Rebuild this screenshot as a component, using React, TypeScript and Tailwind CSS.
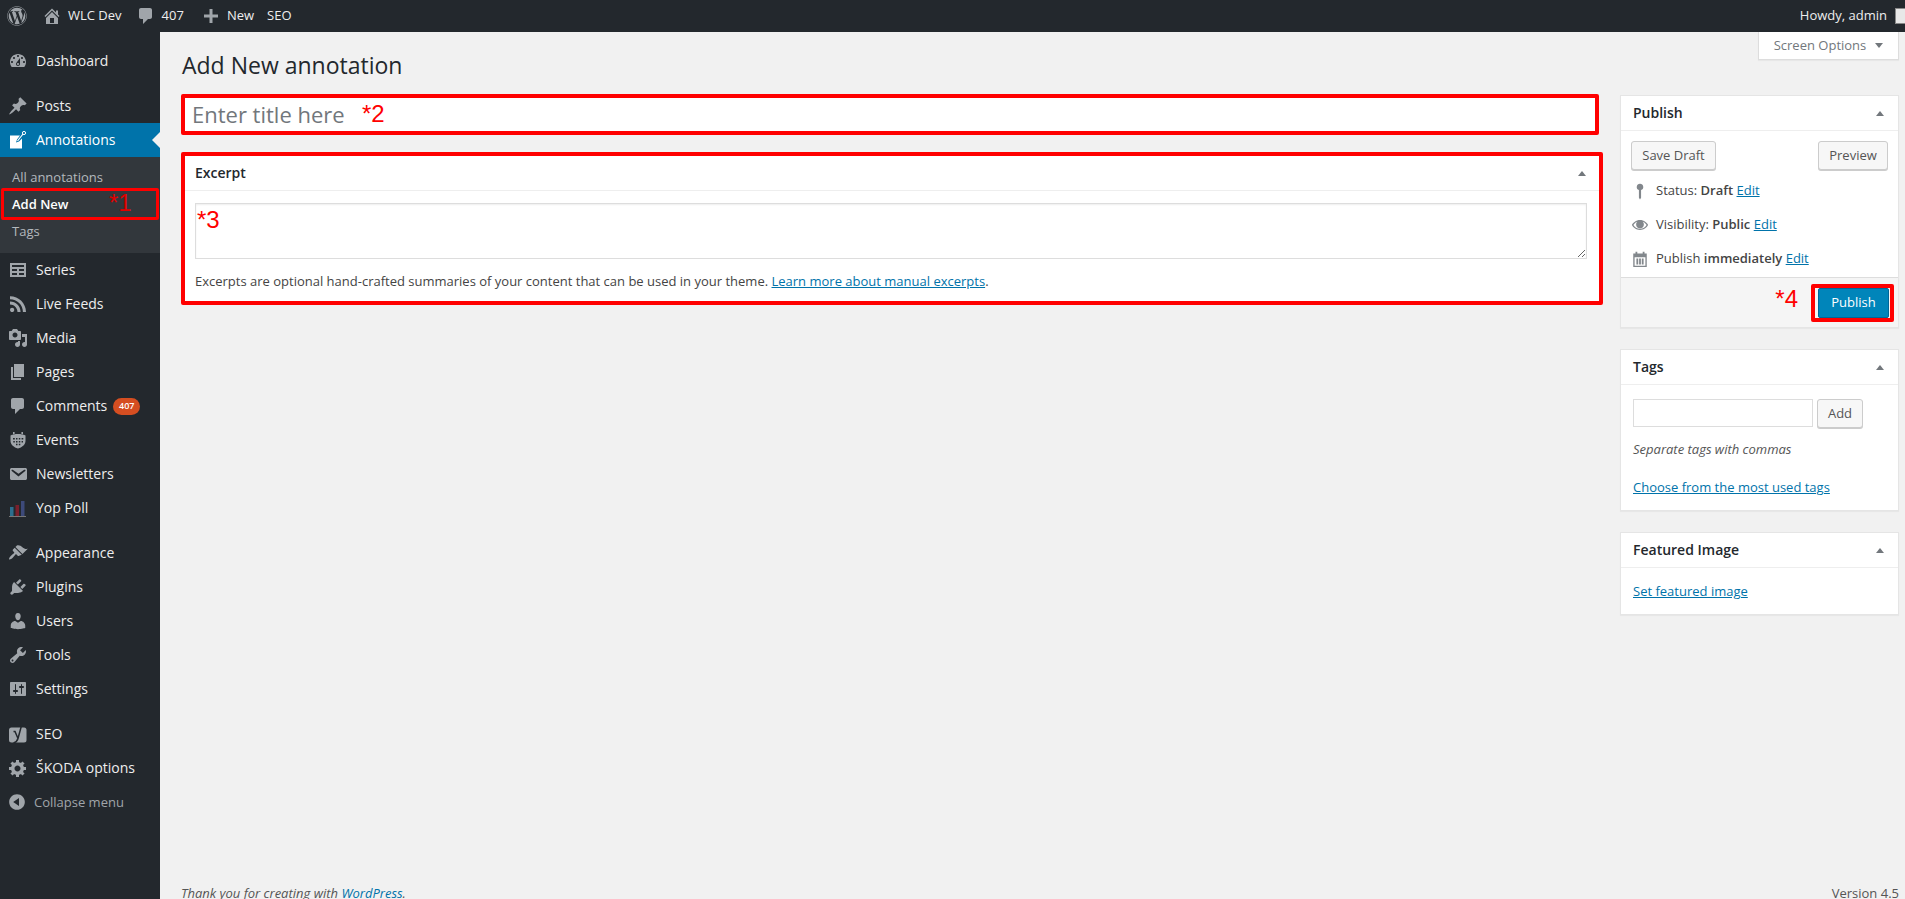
import React from "react";
import { FaWordpress } from "react-icons/fa";

const P: Record<string, string> = {
  dashboard: "M3.76 16h12.48c1.1-1.37 1.76-3.11 1.76-5 0-4.42-3.58-8-8-8s-8 3.58-8 8c0 1.89.66 3.63 1.76 5zM10 4c.55 0 1 .45 1 1s-.45 1-1 1-1-.45-1-1 .45-1 1-1zM6 6c.55 0 1 .45 1 1s-.45 1-1 1-1-.45-1-1 .45-1 1-1zm8 0c.55 0 1 .45 1 1s-.45 1-1 1-1-.45-1-1 .45-1 1-1zm-5.37 5.55L12 7v6c0 1.1-.9 2-2 2s-2-.9-2-2c0-.57.24-1.08.63-1.45zM4 10c.55 0 1 .45 1 1s-.45 1-1 1-1-.45-1-1 .45-1 1-1zm12 0c.55 0 1 .45 1 1s-.45 1-1 1-1-.45-1-1 .45-1 1-1zm-5 3c0-.55-.45-1-1-1s-1 .45-1 1 .45 1 1 1 1-.45 1-1z",
  post: "M10.44 3.02l1.82-1.82 6.36 6.35-1.83 1.82c-1.05-.68-2.48-.57-3.41.36l-.75.75c-.92.93-1.04 2.35-.35 3.41l-1.83 1.82-2.41-2.41-2.8 2.79c-.42.42-3.38 2.71-3.8 2.29s1.86-3.39 2.28-3.81l2.79-2.79L4.1 9.36l1.83-1.82c1.05.69 2.48.57 3.41-.36l.75-.75c.93-.92 1.04-2.35.35-3.41z",
  comments: "M5 2h9c1.1 0 2 .9 2 2v7c0 1.1-.9 2-2 2h-2l-5 5v-5H5c-1.1 0-2-.9-2-2V4c0-1.1.9-2 2-2z",
  home: "M16 8.5l1.53 1.53-1.06 1.06L10 4.62l-6.47 6.47-1.06-1.06L10 2.5l4 4v-2h2v4zm-6-2.46l6 5.99V18H4v-5.97zM12 17v-5H8v5h4z",
  plugins: "M13.11 4.36L9.87 7.6 8 5.73l3.24-3.24c.35-.34 1.05-.2 1.56.32.52.51.66 1.21.31 1.55zm-8 1.77l.91-1.12 9.01 9.01-1.19.84c-.71.71-2.63 1.16-3.82 1.16H6.14L4.9 17.26c-.59.59-1.54.59-2.12 0-.59-.58-.59-1.53 0-2.12l1.24-1.24v-3.88c0-1.13.4-3.19 1.09-3.89zm7.26 3.97l3.24-3.24c.34-.35 1.04-.21 1.55.31.52.51.66 1.21.31 1.55l-3.24 3.25z",
  users: "M10 9.25c-2.27 0-2.73-3.44-2.73-3.44C7 4.02 7.82 2 9.97 2c2.16 0 2.98 2.02 2.71 3.81 0 0-.41 3.44-2.68 3.44zm0 2.57L12.72 10c2.39 0 4.52 2.33 4.52 4.53v2.49s-3.65 1.13-7.24 1.13c-3.65 0-7.24-1.13-7.24-1.13v-2.49c0-2.25 1.94-4.48 4.47-4.48z",
  tools: "M16.68 9.77c-1.34 1.34-3.3 1.67-4.95.99l-5.41 6.52c-.99.99-2.59.99-3.58 0s-.99-2.59 0-3.57l6.52-5.42c-.68-1.65-.35-3.61.99-4.95 1.28-1.28 3.12-1.62 4.72-1.06l-2.89 2.89 2.82 2.82 2.86-2.87c.53 1.58.18 3.39-1.08 4.65zM3.81 16.21c.4.39 1.04.39 1.43 0 .4-.4.4-1.04 0-1.43-.39-.4-1.03-.4-1.43 0-.39.39-.39 1.03 0 1.43z",
  settings: "M18 16V4c0-.55-.45-1-1-1H3c-.55 0-1 .45-1 1v12c0 .55.45 1 1 1h14c.55 0 1-.45 1-1zM8 11h1c.55 0 1 .45 1 1s-.45 1-1 1H8v1.5c0 .28-.22.5-.5.5s-.5-.22-.5-.5V13H6c-.55 0-1-.45-1-1s.45-1 1-1h1V5.5c0-.28.22-.5.5-.5s.5.22.5.5V11zm5-2h-1c-.55 0-1-.45-1-1s.45-1 1-1h1V5.5c0-.28.22-.5.5-.5s.5.22.5.5V7h1c.55 0 1 .45 1 1s-.45 1-1 1h-1v5.5c0 .28-.22.5-.5.5s-.5-.22-.5-.5V9z",
  appearance: "M14.48 11.06L7.41 3.99l1.5-1.5c.5-.56 2.3-.47 3.51.32 1.21.8 1.43 1.28 2.91 2.1 1.18.64 2.45 1.26 4.45.85zm-.71.71L6.7 4.7 4.93 6.47c-.39.39-.39 1.02 0 1.41l1.06 1.06c.39.39.39 1.03 0 1.42-.6.6-1.43 1.11-2.21 1.69-.35.26-.7.53-1.01.84-1.34 1.34-2.12 3-1.57 3.54.54.55 2.2-.23 3.55-1.57.31-.31.58-.66.85-1.02.57-.78 1.08-1.6 1.69-2.21.39-.39 1.02-.39 1.41 0l1.06 1.06c.39.39 1.02.39 1.41 0z",
  media: "M13 11V4c0-.55-.45-1-1-1h-1.67L9 1H5L3.67 3H2c-.55 0-1 .45-1 1v7c0 .55.45 1 1 1h10c.55 0 1-.45 1-1zM7 4.5c1.38 0 2.5 1.12 2.5 2.5S8.38 9.5 7 9.5 4.5 8.38 4.5 7 5.62 4.5 7 4.5zM14 6h5v10.5c0 1.38-1.12 2.5-2.5 2.5S14 17.88 14 16.5s1.12-2.5 2.5-2.5c.17 0 .34.02.5.05V9h-3V6zm-4 8.05V13h2v3.5c0 1.38-1.12 2.5-2.5 2.5S7 17.88 7 16.5 8.12 14 9.5 14c.17 0 .34.02.5.05z",
  page: "M6 15V2h10v13H6zm-1 1h8v2H3V5h2v11z",
  collapse: "M10 2.16c4.33 0 7.84 3.51 7.84 7.84s-3.51 7.84-7.84 7.84S2.16 14.33 2.16 10 5.71 2.16 10 2.16zm2 11.72V6.12L6.18 9.97z",
  generic: "M18 12h-2.18c-.17.7-.44 1.35-.81 1.93l1.54 1.54-2.1 2.1-1.54-1.54c-.58.36-1.23.63-1.91.79V19H8v-2.18c-.68-.16-1.33-.43-1.91-.79l-1.54 1.54-2.12-2.12 1.54-1.54c-.36-.58-.63-1.23-.79-1.91H1V9.03h2.17c.16-.7.44-1.35.8-1.94L2.43 5.55l2.1-2.1 1.54 1.54c.58-.37 1.24-.64 1.93-.81V2h3v2.18c.68.16 1.33.43 1.91.79l1.54-1.54 2.12 2.12-1.54 1.54c.36.59.64 1.24.8 1.94H18V12zm-8.5 1.5c1.66 0 3-1.34 3-3s-1.34-3-3-3-3 1.34-3 3 1.34 3 3 3z",
  rss: "M14.92 18H18C18 9.32 10.82 2.25 2 2.25v3.02c7.12 0 12.92 5.71 12.92 12.73zm-5.44 0h3.08C12.56 12.27 7.82 7.6 2 7.6v3.02c2 0 3.87.77 5.29 2.16 1.41 1.39 2.19 3.25 2.19 5.22zm-5.35-.02c1.17 0 2.13-.93 2.13-2.09 0-1.15-.96-2.09-2.13-2.09-1.18 0-2.13.94-2.13 2.09 0 1.16.95 2.09 2.13 2.09z",
  table: "M18 17V3H2v14h16zM16 7H4V5h12v2zm-7 4H4V9h5v2zm7 0h-5V9h5v2zm-7 4H4v-2h5v2zm7 0h-5v-2h5v2z",
  email: "M3.87 4h13.25C18.37 4 19 4.59 19 5.79v8.42c0 1.19-.63 1.79-1.88 1.79H3.87c-1.25 0-1.88-.6-1.88-1.79V5.79c0-1.2.63-1.79 1.88-1.79zm6.62 8.6l6.74-5.53c.24-.2.43-.66.13-1.07-.29-.41-.82-.42-1.17-.17l-5.7 3.86L4.8 5.83c-.35-.25-.88-.24-1.17.17-.3.41-.11.87.13 1.07z",
  plus: "M17 8.5v3h-5.5V17h-3v-5.5H3v-3h5.5V3h3v5.5z",
  events: "M5 2h1.6v3H5zM13.4 2h1.6v3h-1.6zM2.500 5.500C4.500 4.500 7 4 10 4s5.500.5 7.500 1.500V11c0 3.500-3.500 6.500-7.500 7.500-4-1-7.500-4-7.500-7.500zM5 8v1.500h1.800V8zm3 0v1.500h1.500V8zm2.800 0v1.500h1.500V8zm2.800 0v1.500H15.300V8zM5.300 11v1.500h1.500V11zm2.700 0v1.500h1.500V11zm2.800 0v1.500h1.500V11zm2.800 0v1.500H15V11zM8 13.800v1.500h1.500v-1.500zm2.800 0v1.500h1.500v-1.500z",
  pin: "M10 2a3.600 3.600 0 0 1 1.200 7v8.500L10 19.500l-1.200-2V9A3.600 3.600 0 0 1 10 2z",
  eye: "M10 4.500C5.500 4.500 2.200 7.500 1 10c1.200 2.500 4.500 5.500 9 5.500s7.800-3 9-5.500c-1.200-2.500-4.500-5.500-9-5.500zm0 9.800C6.600 14.300 4 12.200 2.700 10 3.600 8.500 5 7.200 6.700 6.400A4.400 4.400 0 0 0 5.700 9.200a4.300 4.300 0 0 0 8.600 0c0-1-.4-2-1-2.800 1.700.8 3.100 2.100 4 3.600-1.300 2.200-3.900 4.300-7.300 4.300z",
  calendar: "M5 2h2v2h6V2h2v2h2.500v15h-15V4H5zM4 8v9.500h12V8zm2 1.500h2v6.500H6zm3 0h2v6.500H9zm3 0h2v6.500h-2z",
};

function Dash({ name, size = 20, className = "" }: { name: string; size?: number; className?: string }) {
  return (
    <svg viewBox="0 0 20 20" width={size} height={size} fill="currentColor" fillRule="evenodd" className={className}>
      <path d={P[name]} />
    </svg>
  );
}

function NoteIcon() {
  return (
    <svg viewBox="0 0 20 20" width="20" height="20" className="text-white">
      <path d="M2 5.500h10L9 9.500 8 12.500l3-1 3-3v10H2z" fill="currentColor" />
      <path d="M9.500 11L15 4" stroke="currentColor" strokeWidth="1.200" fill="none" />
      <circle cx="16" cy="3" r="1.600" stroke="currentColor" strokeWidth="1" fill="none" />
    </svg>
  );
}

function PollIcon() {
  return (
    <svg viewBox="0 0 20 20" width="20" height="20">
      <rect x="2" y="9" width="3.500" height="9" fill="#2d6e8e" />
      <rect x="7.500" y="7" width="3.500" height="11" fill="#7a1f2b" />
      <rect x="13" y="3" width="3.500" height="15" fill="#3d4a7a" />
      <rect x="1" y="18" width="17" height="1" fill="#777" />
    </svg>
  );
}

function SeoIcon() {
  return (
    <svg viewBox="0 0 20 20" width="20" height="20">
      <rect x="1" y="3.500" width="17.500" height="15" rx="2.500" fill="#a0a5aa" />
      <path d="M5.500 7.500h1.500L10 14.500M13.500 1.500L10 14.500Q9 18 5.500 19" stroke="#23282d" strokeWidth="1.500" fill="none" />
    </svg>
  );
}

type Item = { label: string; icon?: string; custom?: React.ReactNode; badge?: string };

function MenuRow({ item }: { item: Item }) {
  return (
    <div className="flex h-[34px] items-center text-[14px] text-[#eeeeee]">
      <span className="flex w-[36px] justify-center text-[#a0a5aa]">
        {item.custom ?? <Dash name={item.icon!} />}
      </span>
      <span className="pb-[2px]">{item.label}</span>
      {item.badge && (
        <span className="ml-[6px] flex h-[17px] w-[27px] items-center justify-center rounded-full bg-[#d54e21] text-[9px] font-semibold text-white">
          {item.badge}
        </span>
      )}
    </div>
  );
}

const groupA: Item[] = [
  { label: "Series", icon: "table" },
  { label: "Live Feeds", icon: "rss" },
  { label: "Media", icon: "media" },
  { label: "Pages", icon: "page" },
  { label: "Comments", icon: "comments", badge: "407" },
  { label: "Events", icon: "events" },
  { label: "Newsletters", icon: "email" },
  { label: "Yop Poll", custom: <PollIcon /> },
];
const groupB: Item[] = [
  { label: "Appearance", icon: "appearance" },
  { label: "Plugins", icon: "plugins" },
  { label: "Users", icon: "users" },
  { label: "Tools", icon: "tools" },
  { label: "Settings", icon: "settings" },
];
const groupC: Item[] = [
  { label: "SEO", custom: <SeoIcon /> },
  { label: "ŠKODA options", icon: "generic" },
];

function Sidebar() {
  return (
    <aside className="w-40 shrink-0 bg-[#23282d] pt-[12px]">
      <MenuRow item={{ label: "Dashboard", icon: "dashboard" }} />
      <div className="mt-[11px]">
        <MenuRow item={{ label: "Posts", icon: "post" }} />
      </div>
      <div className="relative flex h-[34px] items-center bg-[#0073aa] text-[14px] text-white">
        <span className="flex w-[36px] justify-center">
          <NoteIcon />
        </span>
        <span className="pb-[2px]">Annotations</span>
        <span className="absolute right-0 top-[9px] h-0 w-0 border-y-[8px] border-r-[8px] border-y-transparent border-r-[#f1f1f1]" />
      </div>
      <div className="bg-[#32373c] pb-[8px] pt-[7px] text-[13px] text-[#b4b9be]">
        <div className="flex h-[27px] items-center pl-[12px]">All annotations</div>
        <div className="relative flex h-[27px] items-center pl-[12px] font-semibold text-white">
          Add New
          <span className="absolute -top-[3px] bottom-[-2px] left-[1px] right-[1px] rounded-[2px] border-[3px] border-[#ff0000]" />
          <span className="absolute left-[109px] top-[-1px] font-['Liberation_Sans'] text-[24px] font-normal leading-[26px] text-[#e00000]">*1</span>
        </div>
        <div className="flex h-[27px] items-center pl-[12px]">Tags</div>
      </div>
      {groupA.map((i) => (
        <MenuRow key={i.label} item={i} />
      ))}
      <div className="h-[11px]" />
      {groupB.map((i) => (
        <MenuRow key={i.label} item={i} />
      ))}
      <div className="h-[11px]" />
      {groupC.map((i) => (
        <MenuRow key={i.label} item={i} />
      ))}
      <div className="flex h-[34px] items-center text-[13px] text-[#a0a5aa]">
        <span className="flex w-[34px] justify-center">
          <Dash name="collapse" />
        </span>
        <span className="pt-[1px]">Collapse menu</span>
      </div>
    </aside>
  );
}

function TopBar() {
  return (
    <header className="flex h-8 shrink-0 items-center bg-[#23282d] text-[13px] text-[#eeeeee]">
      <span className="ml-[7px] flex w-[20px] justify-center text-[#a0a5aa]">
        <FaWordpress size={20} />
      </span>
      <span className="ml-[15px] flex text-[#a0a5aa]">
        <Dash name="home" />
      </span>
      <span className="ml-[6px]">WLC Dev</span>
      <span className="ml-[14px] flex text-[#a0a5aa]">
        <Dash name="comments" />
      </span>
      <span className="ml-[6px]">407</span>
      <span className="ml-[17px] flex text-[#a0a5aa]">
        <Dash name="plus" />
      </span>
      <span className="ml-[6px]">New</span>
      <span className="ml-[13px]">SEO</span>
      <span className="ml-auto">Howdy, admin</span>
      <span className="ml-[8px] mr-[-6px] h-[16px] w-[16px] border border-[#888] bg-[#e8e8e8]" />
    </header>
  );
}

function Caret() {
  return <span className="h-0 w-0 border-x-[4px] border-b-[5px] border-x-transparent border-b-[#72777c]" />;
}

function Box({ title, children }: { title: string; children: React.ReactNode }) {
  return (
    <section className="border border-[#e5e5e5] bg-white shadow-[0_1px_1px_rgba(0,0,0,0.04)]">
      <div className="flex h-[35px] items-center justify-between border-b border-[#eeeeee] pl-[12px] pr-[14px] text-[14px] font-semibold text-[#23282d]">
        <span className="pb-[1px]">{title}</span>
        <Caret />
      </div>
      {children}
    </section>
  );
}

function Btn({ children, className = "" }: { children: React.ReactNode; className?: string }) {
  return (
    <button className={"flex h-[29px] items-center justify-center rounded-[3px] border border-[#cccccc] bg-[#f7f7f7] px-[10px] text-[13px] text-[#555555] shadow-[0_1px_0_#cccccc] " + className}>
      {children}
    </button>
  );
}

function Link({ children }: { children: React.ReactNode }) {
  return <a className="text-[#0073aa] underline">{children}</a>;
}

function PubRow({ icon, children }: { icon: string; children: React.ReactNode }) {
  return (
    <div className="flex h-[34px] items-center text-[13px] text-[#444444]">
      <span className="flex w-[18px] justify-center text-[#82878c]">
        <Dash name={icon} size={18} />
      </span>
      <span className="ml-[7px]">{children}</span>
    </div>
  );
}

function Editor() {
  return (
    <div className="min-w-0 flex-1">
      <div className="relative mr-[4px] h-[41px] rounded-[2px] border-[4px] border-[#ff0000] bg-white">
        <input
          placeholder="Enter title here"
          className="h-full w-full bg-transparent px-[7px] pb-[2px] text-[22px] text-[#32373c] outline-none placeholder:text-[#72777c]"
        />
        <span className="absolute left-[177px] top-[-3px] font-['Liberation_Sans'] text-[24px] leading-[38px] text-[#ff0000]">*2</span>
      </div>
      <section className="mt-[17px] h-[153px] rounded-[2px] border-[4px] border-[#ff0000] bg-white">
        <div className="flex h-[35px] items-center justify-between border-b border-[#eeeeee] pl-[10px] pr-[13px] text-[14px] font-semibold text-[#23282d]">
          <span className="pb-[1px]">Excerpt</span>
          <Caret />
        </div>
        <div className="pl-[10px] pr-[12px] pt-[12px]">
          <div className="relative">
            <textarea className="block h-[56px] w-full resize-y border border-[#dddddd] bg-white shadow-[inset_0_1px_2px_rgba(0,0,0,0.07)] outline-none" />
            <span className="absolute left-[2px] top-[3px] font-['Liberation_Sans'] text-[24px] leading-[28px] text-[#ff0000]">*3</span>
          </div>
          <p className="mt-[12px] text-[13px] leading-[20px] text-[#444444]">
            Excerpts are optional hand-crafted summaries of your content that can be used in your theme.{" "}
            <Link>Learn more about manual excerpts</Link>.
          </p>
        </div>
      </section>
    </div>
  );
}

function RightColumn() {
  return (
    <div className="mt-[1px] flex w-[279px] shrink-0 flex-col gap-[21px]">
      <Box title="Publish">
        <div className="flex justify-between px-[10px] pt-[10px]">
          <Btn className="w-[85px]">Save Draft</Btn>
          <Btn className="w-[70px]">Preview</Btn>
        </div>
        <div className="px-[10px] pb-[1px] pt-[4px]">
          <PubRow icon="pin">
            Status: <b className="font-semibold">Draft</b> <Link>Edit</Link>
          </PubRow>
          <PubRow icon="eye">
            Visibility: <b className="font-semibold">Public</b> <Link>Edit</Link>
          </PubRow>
          <PubRow icon="calendar">
            Publish <b className="font-semibold">immediately</b> <Link>Edit</Link>
          </PubRow>
        </div>
        <div className="flex h-[50px] items-center justify-end border-t border-[#dddddd] bg-[#f5f5f5] pr-[4px]">
          <span className="mb-[8px] mr-[13px] font-['Liberation_Sans'] text-[24px] leading-none text-[#ff0000]">*4</span>
          <span className="rounded-[2px] border-[4px] border-[#ff0000] pl-[3px] pr-[1px]">
            <button className="flex h-[30px] w-[71px] items-center justify-center rounded-[2px] border border-[#006799] bg-[#0085ba] text-[13px] text-white">
              Publish
            </button>
          </span>
        </div>
      </Box>
      <Box title="Tags">
        <div className="px-[12px] pb-[13px] pt-[14px]">
          <div className="flex gap-[4px]">
            <input className="h-[28px] w-[180px] border border-[#dddddd] bg-white outline-none" />
            <Btn className="w-[46px]">Add</Btn>
          </div>
          <p className="mt-[11px] text-[13px] italic leading-[20px] text-[#555555]">Separate tags with commas</p>
          <p className="mt-[18px] text-[13px] leading-[20px]">
            <Link>Choose from the most used tags</Link>
          </p>
        </div>
      </Box>
      <Box title="Featured Image">
        <p className="px-[12px] pb-[13px] pt-[13px] text-[13px] leading-[20px]">
          <Link>Set featured image</Link>
        </p>
      </Box>
    </div>
  );
}

export default function App() {
  return (
    <div className="flex h-[899px] flex-col overflow-hidden bg-[#f1f1f1] font-['Open_Sans',sans-serif]">
      <TopBar />
      <div className="flex min-h-0 flex-1">
        <Sidebar />
        <main className="flex min-w-0 flex-1 flex-col pl-[21px] pr-[6px]">
          <div className="flex justify-end">
            <div className="flex h-[28px] w-[141px] items-center justify-center gap-[9px] border border-t-0 border-[#dddddd] bg-white text-[13px] text-[#72777c] shadow-[0_1px_1px_rgba(0,0,0,0.04)]">
              Screen Options
              <span className="h-0 w-0 border-x-[4px] border-t-[5px] border-x-transparent border-t-[#72777c]" />
            </div>
          </div>
          <h1 className="mt-[-10px] h-[44px] pl-[1px] text-[23px] font-normal leading-[30px] text-[#23282d]">Add New annotation</h1>
          <div className="flex flex-1 items-start gap-[17px]">
            <Editor />
            <RightColumn />
          </div>
          <footer className="flex h-[16px] shrink-0 justify-between text-[13px] leading-[20px] text-[#555555]">
            <span className="italic">
              Thank you for creating with <a className="text-[#0073aa]">WordPress</a>.
            </span>
            <span>Version 4.5</span>
          </footer>
        </main>
      </div>
    </div>
  );
}
